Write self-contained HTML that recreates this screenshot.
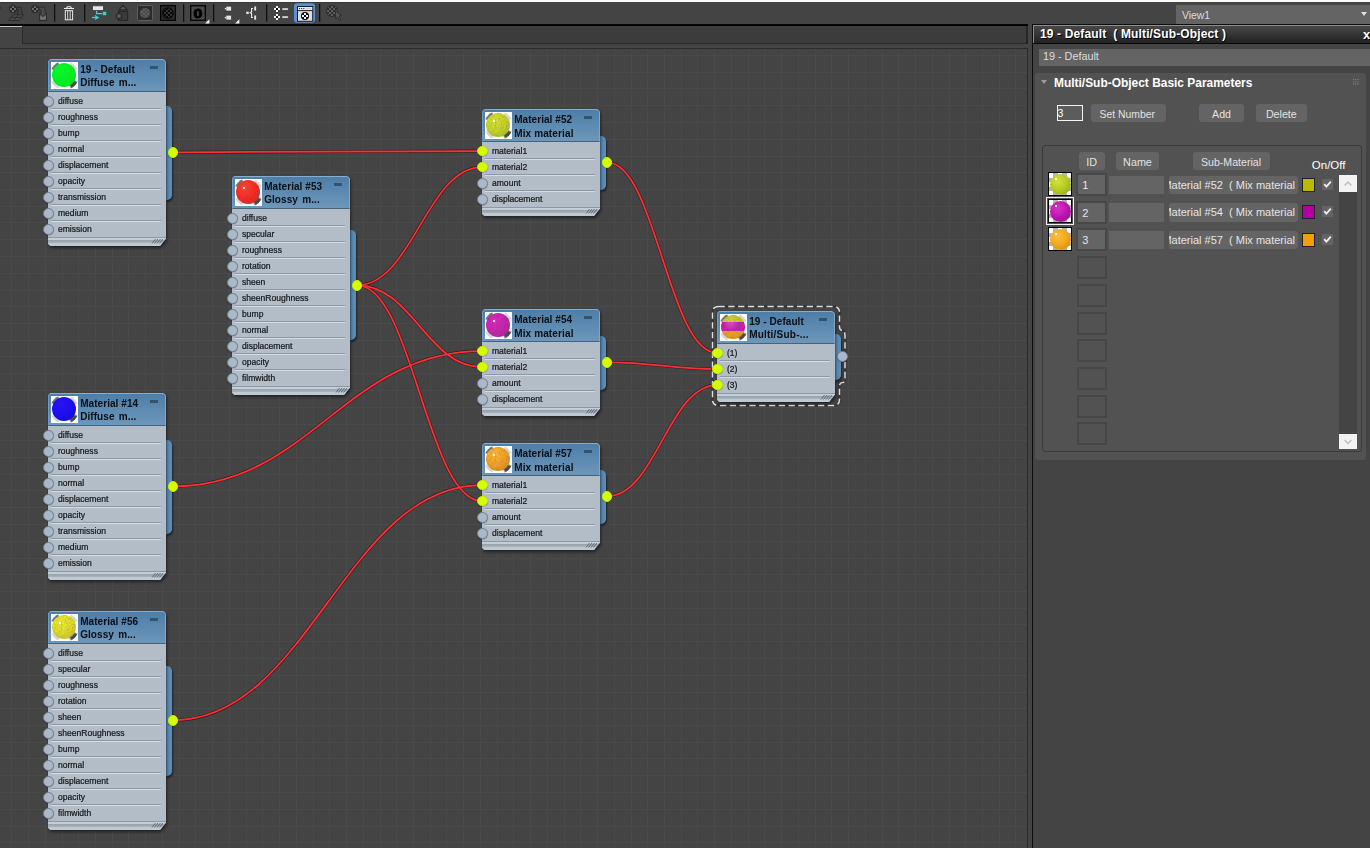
<!DOCTYPE html><html><head><meta charset="utf-8"><title>Slate Material Editor</title><style>

*{box-sizing:border-box;margin:0;padding:0}
html,body{width:1370px;height:848px;overflow:hidden;background:#444;}
body{position:relative;font-family:"Liberation Sans",sans-serif;font-size:11px;color:#e6e6e6;}
.abs{position:absolute}
#topstrip{left:0;top:0;width:1370px;height:2px;background:#fbfbfb}
#toolbar{left:0;top:2px;width:1370px;height:22px;background:#444}
#tbline{left:0;top:24px;width:1028px;height:2px;background:linear-gradient(#1a1a1a 0,#000 30%,#000 80%,#111 100%)}
#tabstrip{left:0;top:26px;width:1028px;height:19px;background:#444}
#tabsel{left:0;top:26px;width:22px;height:1px;background:#c6c6c6}
#tabbox{left:22px;top:26px;width:1006px;height:18px;background:#3c3c3c;border:1px solid #2b2b2b;border-top:0;border-right:2px solid #262626}
#canvas{left:0;top:48px;width:1028px;height:800px;background-color:#444;overflow:hidden}
#cvt{left:0;top:0;width:1028px;height:1px;background:#2b2b2b}
#cvr{left:1027px;top:0;width:1px;height:800px;background:#2b2b2b}
#grid{left:0;top:0;width:1027px;height:800px}
#viewdd{left:1176px;top:5px;width:194px;height:19px;background:#646464;color:#dcdcdc;font-size:10.4px;line-height:21px;padding-left:6px}
#viewdd i{position:absolute;left:185px;top:7px;width:0;height:0;border-left:3px solid transparent;border-right:3px solid transparent;border-top:4px solid #e0e0e0}

/* nodes */
.nw{position:absolute;width:118px;filter:drop-shadow(0 0 .7px rgba(18,26,36,.95)) drop-shadow(1px 2px 1.6px rgba(0,0,0,.5))}
.node{position:absolute;left:0;top:0;width:118px;background:#b3bdc7;clip-path:polygon(0 3px,1px 1px,3px 0,calc(100% - 4px) 0,calc(100% - 1px) 1px,100% 4px,100% calc(100% - 7.5px),calc(100% - 6px) 100%,3px 100%,1px calc(100% - 1px),0 calc(100% - 3px))}
.nh{position:absolute;left:0;top:0;width:118px;height:33px;border-radius:3px 4px 0 0;background:linear-gradient(#4e7da7 0%,#5685ae 30%,#6d97ba 100%);border-top:1px solid #86aecf;border-right:1px solid #7fa8cb;border-left:1px solid #6f9bc0;border-bottom:1px solid #46627c}
.nh .th{position:absolute;left:2px;top:2px;width:27px;height:27px;background:#fff;overflow:hidden}
.nh .t{position:absolute;left:31.2px;top:3px;width:80px;font-weight:bold;font-size:10px;line-height:13px;color:#0a0d12;white-space:nowrap;letter-spacing:.06px}
.nh .t .g{margin-left:1.5px}
.nh .t.mx{line-height:14px;top:2.5px}
.nh .t.mx span{letter-spacing:.13px}
.nh .mn{position:absolute;left:101px;top:5.8px;width:8px;height:2.8px;background:#33536f}
.sl{position:absolute;left:0;width:118px;height:16px}
.sl span{position:absolute;left:10px;top:0;line-height:16px;font-size:8.55px;color:#15171b;white-space:nowrap;-webkit-text-stroke:.22px #15171b}
.sl b{position:absolute;left:3px;top:15px;width:110px;height:2px;border-top:1px solid #8d98a4;border-bottom:1px solid #d3dbe3}
.so{position:absolute;width:11px;height:11px;border-radius:50%;background:#a9b8ca;border:1px solid #74818f;box-shadow:0 .5px 1px rgba(0,0,0,.3)}
.so.on{background:#d4ff00;border-color:#c4ec00;width:10.6px;height:10.6px;margin:.2px}
.ft{position:absolute;left:0;width:118px;height:9px;border-top:1px solid #8d98a4;background:linear-gradient(#c6d0da 0,#c2ccd6 22%,#98a3ae 30%,#a9b4bf 62%,#c3cdd7 70%,#bcc6d0 100%)}
.tab{position:absolute;left:118px;width:6.3px;background:#5a8cb8;border-radius:0 5px 5px 0;box-shadow:1px 2px 2px rgba(0,0,0,.5)}

/* ---------- right panel ---------- */
#pline{left:1032px;top:24px;width:1px;height:824px;background:#0c0c0c}
#ptitle{left:1033px;top:24px;width:337px;height:20px;background:linear-gradient(#4a4a4a 0,#3c3c3c 35%,#222 100%);border-top:1px solid #0e0e0e;border-bottom:1px solid #0a0a0a;box-shadow:inset 1px 1px 0 #8e8e8e}
#ptitle span{position:absolute;left:7px;top:2px;font-weight:bold;font-size:12px;line-height:15px;color:#fff;white-space:pre;text-shadow:1px 1px 0 #000;letter-spacing:.14px}
#ptitle b{position:absolute;left:330px;top:2px;font-size:13px;line-height:15px;color:#fff;text-shadow:1px 1px 0 #000}
#pname{left:1039px;top:49px;width:331px;height:17px;background:#646464;color:#dedede;font-size:10.8px;line-height:15px;padding-left:4px}
#roll{left:1035px;top:73px;width:331px;height:387px;background:#525252;border-radius:3px}
#roll .tri{position:absolute;left:6px;top:7px;width:0;height:0;border-left:3px solid transparent;border-right:3px solid transparent;border-top:4.5px solid #9c9c9c}
#roll .rt{position:absolute;left:19px;top:2px;font-weight:bold;font-size:11.95px;line-height:16px;color:#fff;white-space:nowrap}
#roll .grip{position:absolute;left:318px;top:6px}
.btn{position:absolute;background:#646464;border-radius:3px;color:#e2e2e2;text-align:center;height:18px;line-height:20px;white-space:nowrap;overflow:hidden}
#spin{position:absolute;left:22px;top:32px;width:26px;height:16px;border:1px solid #f4f4f4;background:#5c5c5c;color:#fff;font-size:10.5px;line-height:15px;padding-left:0;text-indent:-.4px}
#grp{position:absolute;left:7px;top:72.3px;width:320px;height:306.5px;border:1px solid #3a3a3a;border-radius:3px}
.lbl{position:absolute;color:#fff;white-space:nowrap}
.mth{position:absolute;width:24px;height:23.4px;border:1px solid #000;overflow:hidden;
 background:#fff conic-gradient(#b4b4b4 25%,#fff 0 50%,#b4b4b4 0 75%,#fff 0) 0 0/9px 9px}
.mth.sel{outline:1px solid #f2f2f2;outline-offset:1px}
.mth i{position:absolute;left:.6px;top:.8px;width:21px;height:20.6px;border-radius:50%}
.mth u{position:absolute;left:6px;top:5px;width:1.6px;height:1.6px;background:#fff;border-radius:50%}
.idf{position:absolute;left:33.3px;width:30.5px;height:23.3px;border:2.5px solid #484848;background:#646464;color:#e6e6e6;font-size:11px;line-height:20.5px;padding-left:4px}
.idf.e{background:transparent;border-width:2px;border-color:#474747}
.nmf{position:absolute;left:73.5px;width:55.5px;height:18.5px;background:#646464}
.smb{width:129.4px;height:18.5px;font-size:11px;color:#e4e4e4}
.smb span{position:absolute;left:calc(50% - 1.4px);top:0;transform:translateX(-50%);white-space:pre;line-height:19.5px}
.sw{position:absolute;left:267px;width:13px;height:14px;border:1px solid #232323}
.cb{position:absolute;left:287.4px;width:11px;height:10.6px;background:#646464}
#sbt{position:absolute;left:304px;top:102px;width:18px;height:274px;background:#444}
.sbb{position:absolute;left:304px;width:18px;background:#f2f2f2}

</style></head><body>
<svg width="0" height="0" style="position:absolute"><defs><filter id="nz" x="0" y="0" width="100%" height="100%"><feTurbulence type="fractalNoise" baseFrequency="0.55" numOctaves="2" seed="7" result="n"/><feColorMatrix in="n" type="matrix" values="0 0 0 0 0.35  0 0 0 0 0.08  0 0 0 0 0.12  0.8 0.8 0 0 -0.66" result="m"/><feComposite in="m" in2="SourceGraphic" operator="in" result="c"/><feMerge><feMergeNode in="SourceGraphic"/><feMergeNode in="c"/></feMerge></filter></defs></svg>
<div id="topstrip" class="abs"></div>
<div id="toolbar" class="abs">
<svg class="abs" style="left:0;top:0" width="400" height="22" viewBox="0 2 400 22">
<defs><pattern id="ck2" x="0" y="0" width="4" height="4" patternUnits="userSpaceOnUse"><rect x="0" y="0" width="2" height="2" fill="currentColor"/><rect x="2" y="2" width="2" height="2" fill="currentColor"/></pattern><pattern id="ckA" width="4" height="4" patternUnits="userSpaceOnUse" x="1" y="1"><rect width="2" height="2" fill="#484848"/><rect x="2" y="2" width="2" height="2" fill="#484848"/></pattern><pattern id="ckB" width="4" height="4" patternUnits="userSpaceOnUse" x="0" y="0"><rect width="2" height="2" fill="#343434"/><rect x="2" y="2" width="2" height="2" fill="#343434"/></pattern><pattern id="ckC" width="4" height="4" patternUnits="userSpaceOnUse" x="1" y="0"><rect width="2" height="2" fill="#5e5e5e"/><rect x="2" y="2" width="2" height="2" fill="#5e5e5e"/></pattern><clipPath id="cpA"><circle cx="145" cy="13" r="5"/></clipPath><clipPath id="cpB"><circle cx="168" cy="13" r="4.6"/></clipPath><clipPath id="cpC"><circle cx="332" cy="11" r="5.3"/></clipPath></defs>
<rect x="0" y="2" width="400" height="1" fill="#383838"/>
<rect x="0" y="6.5" width=".8" height="2.8" fill="#323232"/>
<circle cx="13" cy="9" r="4.2" fill="#2d2d2d"/><rect x="12" y="6" width="2" height="2" fill="#6c6c6c"/><rect x="12" y="10" width="2" height="2" fill="#6c6c6c"/><rect x="10" y="8" width="2" height="2" fill="#6c6c6c"/><rect x="14" y="8" width="2" height="2" fill="#6c6c6c"/><rect x="12" y="8" width="2" height="2" fill="#1c1c1c"/>
<path d="M17 7.3H21.3V12.2H22.8L19.8 15.6 16.8 12.2H18.7V9.8H17Z" fill="#464646" stroke="#2d2d2d" stroke-width="1" stroke-linejoin="round"/>
<path d="M13.5 14.6H23.3L19.6 20.5H8.6Z" fill="#494949" stroke="#2d2d2d" stroke-width="1"/>
<path d="M11.3 17.5H21.5M18.3 14.5L14 20.5" stroke="#2d2d2d" stroke-width="1" fill="none"/>
<circle cx="35" cy="9" r="4.2" fill="#2d2d2d"/><rect x="34" y="6" width="2" height="2" fill="#6c6c6c"/><rect x="34" y="10" width="2" height="2" fill="#6c6c6c"/><rect x="32" y="8" width="2" height="2" fill="#6c6c6c"/><rect x="36" y="8" width="2" height="2" fill="#6c6c6c"/><rect x="34" y="8" width="2" height="2" fill="#1c1c1c"/>
<path d="M39 7.2H45V12.8H46.6L43 16.6 39.4 12.8H41.2V10H39Z" fill="#4c4c4c" stroke="#2d2d2d" stroke-width="1" stroke-linejoin="round"/>
<path d="M39.6 13.2V20.4H46.4V13.2" fill="none" stroke="#2d2d2d" stroke-width="1.2"/>
<path d="M40.2 15L43 17.6 45.8 15V19.8H40.2Z" fill="#767676"/>
<rect x="54.1" y="4" width="1.15" height="17.8" fill="#0c0c0c"/>
<rect x="84.1" y="4" width="1.15" height="17.8" fill="#0c0c0c"/>
<rect x="183.1" y="4" width="1.15" height="17.8" fill="#0c0c0c"/>
<rect x="213.1" y="4" width="1.15" height="17.8" fill="#0c0c0c"/>
<rect x="266.1" y="4" width="1.15" height="17.8" fill="#0c0c0c"/>
<rect x="319.1" y="4" width="1.15" height="17.8" fill="#0c0c0c"/>
<path d="M64 8.5H74" stroke="#e9e9e9" stroke-width="1.1"/>
<path d="M66.8 8.2C66.8 6 71.2 6 71.2 8.2" fill="none" stroke="#e9e9e9" stroke-width="1.1"/>
<rect x="65.3" y="10.7" width="7.3" height="9.1" fill="#3a3a3a" stroke="#e9e9e9" stroke-width="1"/>
<path d="M67.7 10.6V19.8M70.2 10.6V19.8" stroke="#e9e9e9" stroke-width=".9"/>
<rect x="92.6" y="5.8" width="10.8" height="4.6" fill="#e6e6e6" stroke="#3a3a3a" stroke-width=".8"/>
<path d="M96.6 10.8V13.6H102.2" fill="none" stroke="#3fd2d2" stroke-width="1.3"/>
<rect x="102.8" y="11.8" width="3.4" height="3.4" fill="#3fd2d2"/>
<path d="M92 17.5H96" stroke="#3fd2d2" stroke-width="1.3"/><path d="M94.6 14.8L99.4 17.5 94.6 20.2 95.8 17.5Z" fill="#3fd2d2"/>
<path d="M123 5.4L127.2 9.9H118.8Z" fill="#5c5c5c" stroke="#2a2a2a" stroke-width="1.1" stroke-linejoin="round"/>
<rect x="118.6" y="11.4" width="9" height="9" fill="#3b3b3b" stroke="#292929" stroke-width="1.3"/>
<circle cx="119" cy="16" r="2.6" fill="#5a5a5a" stroke="#292929" stroke-width="1.2"/>
<rect x="137.5" y="5.5" width="15" height="15" rx=".8" fill="#2b2b2b" stroke="#5e5e5e" stroke-width="1"/>
<circle cx="145" cy="13" r="5" fill="#5e5e5e"/>
<rect x="139" y="7" width="12" height="12" fill="url(#ckA)" clip-path="url(#cpA)"/>
<rect x="160.6" y="5.6" width="14.8" height="14.8" fill="#2a2a2a" stroke="#050505" stroke-width="1.2"/>
<circle cx="168" cy="13" r="5.8" fill="#060606"/>
<rect x="162" y="7" width="12" height="12" fill="url(#ckB)" clip-path="url(#cpB)"/>
<rect x="190.7" y="5.7" width="14.6" height="14.6" fill="#4b4b4b" stroke="#060606" stroke-width="1.4"/>
<text x="198" y="17.8" transform="translate(198 0) scale(1.2 1) translate(-198 0)" text-anchor="middle" font-family="Liberation Sans,sans-serif" font-weight="bold" font-size="13.2" fill="#000" stroke="#000" stroke-width=".9" stroke-linejoin="round">0</text>
<path d="M205 23.6H209.4V19.2Z" fill="#f2f2f2"/>
<rect x="226" y="6.2" width="5.4" height="4.8" fill="#e4e4e4" stroke="#353535" stroke-width=".6"/>
<rect x="224.8" y="7.9" width="1.4" height="1.4" fill="#e4e4e4"/>
<rect x="226" y="15.2" width="5.4" height="4.8" fill="#e4e4e4" stroke="#353535" stroke-width=".6"/>
<rect x="224.8" y="16.9" width="1.4" height="1.4" fill="#e4e4e4"/>
<path d="M235 23.6H239.4V19.2Z" fill="#f2f2f2"/>
<rect x="246" y="11.2" width="3" height="3" fill="#e8e8e8" stroke="#353535" stroke-width=".5"/>
<path d="M253.2 8.5H251.6V12L250.2 12.8 251.6 13.6V17.5H253.2" fill="none" stroke="#ececec" stroke-width="1.1"/>
<rect x="254" y="6.1" width="2.3" height="4.8" fill="#e8e8e8" stroke="#353535" stroke-width=".5"/>
<rect x="254" y="15.1" width="2.3" height="4.9" fill="#e8e8e8" stroke="#353535" stroke-width=".5"/>
<circle cx="277" cy="9" r="0.1" fill="#444"/><rect x="276" y="6" width="2" height="2" fill="#f2f2f2"/><rect x="276" y="10" width="2" height="2" fill="#f2f2f2"/><rect x="274" y="8" width="2" height="2" fill="#f2f2f2"/><rect x="278" y="8" width="2" height="2" fill="#f2f2f2"/><rect x="276" y="8" width="2" height="2" fill="#0a0a0a"/>
<rect x="282" y="8" width="6.2" height="2.1" fill="#ececec" stroke="#353535" stroke-width=".5"/>
<circle cx="277" cy="17" r="0.1" fill="#444"/><rect x="276" y="14" width="2" height="2" fill="#f2f2f2"/><rect x="276" y="18" width="2" height="2" fill="#f2f2f2"/><rect x="274" y="16" width="2" height="2" fill="#f2f2f2"/><rect x="278" y="16" width="2" height="2" fill="#f2f2f2"/><rect x="276" y="16" width="2" height="2" fill="#0a0a0a"/>
<rect x="282" y="16" width="6.2" height="2.1" fill="#ececec" stroke="#353535" stroke-width=".5"/>
<rect x="294" y="3.2" width="21" height="19.6" rx="3.2" fill="#5b8fd2"/>
<rect x="297.5" y="6.5" width="15.2" height="14.8" fill="#dedede" stroke="#1c1c1c" stroke-width="1"/>
<rect x="298" y="7" width="14.2" height="3" fill="#ececec"/>
<path d="M297.5 10.6H312.7" stroke="#1c1c1c" stroke-width="1"/>
<rect x="299.1" y="8" width="1" height="1.1" fill="#222"/>
<rect x="301.2" y="8" width="1" height="1.1" fill="#222"/>
<rect x="303.3" y="8" width="1" height="1.1" fill="#222"/>
<path d="M305.5 8.5H311.5" stroke="#c4c4c4" stroke-width=".8"/>
<circle cx="305" cy="16" r="3.7" fill="#111"/>
<circle cx="305" cy="16" r="0.1" fill="#111"/><rect x="304" y="13" width="2" height="2" fill="#f4f4f4"/><rect x="304" y="17" width="2" height="2" fill="#f4f4f4"/><rect x="302" y="15" width="2" height="2" fill="#f4f4f4"/><rect x="306" y="15" width="2" height="2" fill="#f4f4f4"/><rect x="304" y="15" width="2" height="2" fill="#0a0a0a"/>
<circle cx="305" cy="16" r="3.7" fill="none" stroke="#111" stroke-width="1"/>
<circle cx="332" cy="11" r="6" fill="#2d2d2d"/>
<rect x="326" y="5" width="12" height="12" fill="url(#ckC)" clip-path="url(#cpC)"/>
<path d="M335.4 10.8L341.6 15.4 339.1 16 341 19.4 339.4 20.3 337.5 17 335.7 18.8Z" fill="#575757" stroke="#2d2d2d" stroke-width="1" stroke-linejoin="round"/>
</svg>
</div>
<div id="tbline" class="abs"></div>
<div id="tabstrip" class="abs"></div><div id="tabsel" class="abs"></div><div id="tabbox" class="abs"></div>
<div id="viewdd" class="abs">View1<i></i></div>
<div id="canvas" class="abs">
<svg id="grid" class="abs" width="1027" height="800" viewBox="0 48 1027 800" shape-rendering="crispEdges">
<path d="M11 48V848M28 48V848M45 48V848M62 48V848M78 48V848M95 48V848M112 48V848M128 48V848M145 48V848M162 48V848M179 48V848M195 48V848M212 48V848M229 48V848M246 48V848M262 48V848M279 48V848M296 48V848M313 48V848M329 48V848M346 48V848M363 48V848M380 48V848M396 48V848M413 48V848M430 48V848M446 48V848M463 48V848M480 48V848M497 48V848M513 48V848M530 48V848M547 48V848M564 48V848M580 48V848M597 48V848M614 48V848M631 48V848M647 48V848M664 48V848M681 48V848M697 48V848M714 48V848M731 48V848M748 48V848M764 48V848M781 48V848M798 48V848M815 48V848M831 48V848M848 48V848M865 48V848M882 48V848M898 48V848M915 48V848M932 48V848M949 48V848M965 48V848M982 48V848M999 48V848M1015 48V848M0 55H1027M0 72H1027M0 88H1027M0 105H1027M0 122H1027M0 139H1027M0 156H1027M0 172H1027M0 189H1027M0 206H1027M0 222H1027M0 239H1027M0 256H1027M0 273H1027M0 290H1027M0 306H1027M0 323H1027M0 340H1027M0 356H1027M0 373H1027M0 390H1027M0 407H1027M0 424H1027M0 440H1027M0 457H1027M0 474H1027M0 490H1027M0 507H1027M0 524H1027M0 541H1027M0 558H1027M0 574H1027M0 591H1027M0 608H1027M0 624H1027M0 641H1027M0 658H1027M0 675H1027M0 692H1027M0 708H1027M0 725H1027M0 742H1027M0 758H1027M0 775H1027M0 792H1027M0 809H1027M0 826H1027M0 842H1027" transform="translate(.5 .5)" stroke="#4a4a4a" stroke-width="1" fill="none"/>
</svg>
<div class="abs" style="left:0;top:-48px;width:1027px;height:848px">
<div class="abs" style="left:0;top:48px"><svg class="abs" style="left:0;top:0" width="1027" height="800" viewBox="0 48 1027 800">
<path d="M173.2 152.25 C309.072 152.25 346.128 151 482 151" fill="none" stroke="#2a1414" stroke-opacity=".8" stroke-width="3"/>
<path d="M357.2 285.25 C412.112 285.25 427.088 167 482 167" fill="none" stroke="#2a1414" stroke-opacity=".8" stroke-width="3"/>
<path d="M357.2 285.25 C412.112 285.25 427.088 367 482 367" fill="none" stroke="#2a1414" stroke-opacity=".8" stroke-width="3"/>
<path d="M357.2 285.25 C412.112 285.25 427.088 501 482 501" fill="none" stroke="#2a1414" stroke-opacity=".8" stroke-width="3"/>
<path d="M173.2 486.25 C309.072 486.25 346.128 351 482 351" fill="none" stroke="#2a1414" stroke-opacity=".8" stroke-width="3"/>
<path d="M173.2 720.25 C309.072 720.25 346.128 485 482 485" fill="none" stroke="#2a1414" stroke-opacity=".8" stroke-width="3"/>
<path d="M607.2 162.25 C655.512 162.25 668.688 353 717 353" fill="none" stroke="#2a1414" stroke-opacity=".8" stroke-width="3"/>
<path d="M607.2 362.25 C655.512 362.25 668.688 369 717 369" fill="none" stroke="#2a1414" stroke-opacity=".8" stroke-width="3"/>
<path d="M607.2 496.25 C655.512 496.25 668.688 385 717 385" fill="none" stroke="#2a1414" stroke-opacity=".8" stroke-width="3"/>
<path d="M173.2 152.25 C309.072 152.25 346.128 151 482 151" fill="none" stroke="#ff2f36" stroke-width="1.75"/>
<path d="M357.2 285.25 C412.112 285.25 427.088 167 482 167" fill="none" stroke="#ff2f36" stroke-width="1.75"/>
<path d="M357.2 285.25 C412.112 285.25 427.088 367 482 367" fill="none" stroke="#ff2f36" stroke-width="1.75"/>
<path d="M357.2 285.25 C412.112 285.25 427.088 501 482 501" fill="none" stroke="#ff2f36" stroke-width="1.75"/>
<path d="M173.2 486.25 C309.072 486.25 346.128 351 482 351" fill="none" stroke="#ff2f36" stroke-width="1.75"/>
<path d="M173.2 720.25 C309.072 720.25 346.128 485 482 485" fill="none" stroke="#ff2f36" stroke-width="1.75"/>
<path d="M607.2 162.25 C655.512 162.25 668.688 353 717 353" fill="none" stroke="#ff2f36" stroke-width="1.75"/>
<path d="M607.2 362.25 C655.512 362.25 668.688 369 717 369" fill="none" stroke="#ff2f36" stroke-width="1.75"/>
<path d="M607.2 496.25 C655.512 496.25 668.688 385 717 385" fill="none" stroke="#ff2f36" stroke-width="1.75"/>
</svg></div>
<div class="tab" style="left:166px;top:106px;height:94px"></div>
<div class="nw" style="left:48px;top:59px;height:187px"><div class="node" id="n1" style="height:187px">
<div class="nh"><div class="th"><i style="position:absolute;left:-1px;top:-.8px;width:28.6px;height:28.6px;border-radius:50%;background:conic-gradient(#fff 0 22deg,#d8d8d8 30deg 60deg,#fff 68deg 112deg,#4a4a4a 122deg 148deg,#fff 158deg 202deg,#d4d4d4 210deg 240deg,#fff 248deg 292deg,#707070 300deg 330deg,#fff 338deg)"></i><i style="position:absolute;left:1.1px;top:1px;width:24.2px;height:24.2px;border-radius:50%;background:radial-gradient(circle at 36% 30%,#08f62a 0,#04ee22 50%,#02d420 100%)"></i></div><div class="t">19 - Default<br>Diffuse <span class="g">m...</span></div><div class="mn"></div></div>
<div class="sl" style="top:34px"><span>diffuse</span><b></b></div>
<div class="sl" style="top:50px"><span>roughness</span><b></b></div>
<div class="sl" style="top:66px"><span>bump</span><b></b></div>
<div class="sl" style="top:82px"><span>normal</span><b></b></div>
<div class="sl" style="top:98px"><span>displacement</span><b></b></div>
<div class="sl" style="top:114px"><span>opacity</span><b></b></div>
<div class="sl" style="top:130px"><span>transmission</span><b></b></div>
<div class="sl" style="top:146px"><span>medium</span><b></b></div>
<div class="sl" style="top:162px"><span>emission</span></div>
<div class="ft" style="top:178px"><svg class="abs" style="right:2px;top:0" width="13" height="6"><path d="M1 5.5L4.5 1M3.5 5.5L7 1M6 5.5L9.5 1M8.5 5.5L12 1" stroke="#5a6470" stroke-width=".9" fill="none"/></svg></div>
</div></div>
<div class="so" style="left:42.8px;top:95.5px"></div>
<div class="so" style="left:42.8px;top:111.5px"></div>
<div class="so" style="left:42.8px;top:127.5px"></div>
<div class="so" style="left:42.8px;top:143.5px"></div>
<div class="so" style="left:42.8px;top:159.5px"></div>
<div class="so" style="left:42.8px;top:175.5px"></div>
<div class="so" style="left:42.8px;top:191.5px"></div>
<div class="so" style="left:42.8px;top:207.5px"></div>
<div class="so" style="left:42.8px;top:223.5px"></div>
<div class="so on" style="left:167.7px;top:146.75px"></div>
<div class="tab" style="left:350px;top:230px;height:110px"></div>
<div class="nw" style="left:232px;top:176px;height:219px"><div class="node" id="n2" style="height:219px">
<div class="nh"><div class="th"><i style="position:absolute;left:-1px;top:-.8px;width:28.6px;height:28.6px;border-radius:50%;background:conic-gradient(#fff 0 22deg,#d8d8d8 30deg 60deg,#fff 68deg 112deg,#4a4a4a 122deg 148deg,#fff 158deg 202deg,#d4d4d4 210deg 240deg,#fff 248deg 292deg,#707070 300deg 330deg,#fff 338deg)"></i><i style="filter:url(#nz);position:absolute;left:1.1px;top:1px;width:24.2px;height:24.2px;border-radius:50%;background:radial-gradient(circle at 36% 30%,#ff4230 0,#f8220e 50%,#c22c22 100%)"><u style="position:absolute;left:7px;top:6.8px;width:2.4px;height:1.8px;background:#fff;border-radius:40%;box-shadow:0 0 1px rgba(255,255,255,.7)"></u></i></div><div class="t">Material #53<br>Glossy <span class="g">m...</span></div><div class="mn"></div></div>
<div class="sl" style="top:34px"><span>diffuse</span><b></b></div>
<div class="sl" style="top:50px"><span>specular</span><b></b></div>
<div class="sl" style="top:66px"><span>roughness</span><b></b></div>
<div class="sl" style="top:82px"><span>rotation</span><b></b></div>
<div class="sl" style="top:98px"><span>sheen</span><b></b></div>
<div class="sl" style="top:114px"><span>sheenRoughness</span><b></b></div>
<div class="sl" style="top:130px"><span>bump</span><b></b></div>
<div class="sl" style="top:146px"><span>normal</span><b></b></div>
<div class="sl" style="top:162px"><span>displacement</span><b></b></div>
<div class="sl" style="top:178px"><span>opacity</span><b></b></div>
<div class="sl" style="top:194px"><span>filmwidth</span></div>
<div class="ft" style="top:210px"><svg class="abs" style="right:2px;top:0" width="13" height="6"><path d="M1 5.5L4.5 1M3.5 5.5L7 1M6 5.5L9.5 1M8.5 5.5L12 1" stroke="#5a6470" stroke-width=".9" fill="none"/></svg></div>
</div></div>
<div class="so" style="left:226.8px;top:212.5px"></div>
<div class="so" style="left:226.8px;top:228.5px"></div>
<div class="so" style="left:226.8px;top:244.5px"></div>
<div class="so" style="left:226.8px;top:260.5px"></div>
<div class="so" style="left:226.8px;top:276.5px"></div>
<div class="so" style="left:226.8px;top:292.5px"></div>
<div class="so" style="left:226.8px;top:308.5px"></div>
<div class="so" style="left:226.8px;top:324.5px"></div>
<div class="so" style="left:226.8px;top:340.5px"></div>
<div class="so" style="left:226.8px;top:356.5px"></div>
<div class="so" style="left:226.8px;top:372.5px"></div>
<div class="so on" style="left:351.7px;top:279.75px"></div>
<div class="tab" style="left:166px;top:440px;height:94px"></div>
<div class="nw" style="left:48px;top:393px;height:187px"><div class="node" id="n3" style="height:187px">
<div class="nh"><div class="th"><i style="position:absolute;left:-1px;top:-.8px;width:28.6px;height:28.6px;border-radius:50%;background:conic-gradient(#fff 0 22deg,#d8d8d8 30deg 60deg,#fff 68deg 112deg,#4a4a4a 122deg 148deg,#fff 158deg 202deg,#d4d4d4 210deg 240deg,#fff 248deg 292deg,#707070 300deg 330deg,#fff 338deg)"></i><i style="position:absolute;left:1.1px;top:1px;width:24.2px;height:24.2px;border-radius:50%;background:radial-gradient(circle at 36% 30%,#2814f4 0,#1c0eea 50%,#170cc0 100%)"></i></div><div class="t">Material #14<br>Diffuse <span class="g">m...</span></div><div class="mn"></div></div>
<div class="sl" style="top:34px"><span>diffuse</span><b></b></div>
<div class="sl" style="top:50px"><span>roughness</span><b></b></div>
<div class="sl" style="top:66px"><span>bump</span><b></b></div>
<div class="sl" style="top:82px"><span>normal</span><b></b></div>
<div class="sl" style="top:98px"><span>displacement</span><b></b></div>
<div class="sl" style="top:114px"><span>opacity</span><b></b></div>
<div class="sl" style="top:130px"><span>transmission</span><b></b></div>
<div class="sl" style="top:146px"><span>medium</span><b></b></div>
<div class="sl" style="top:162px"><span>emission</span></div>
<div class="ft" style="top:178px"><svg class="abs" style="right:2px;top:0" width="13" height="6"><path d="M1 5.5L4.5 1M3.5 5.5L7 1M6 5.5L9.5 1M8.5 5.5L12 1" stroke="#5a6470" stroke-width=".9" fill="none"/></svg></div>
</div></div>
<div class="so" style="left:42.8px;top:429.5px"></div>
<div class="so" style="left:42.8px;top:445.5px"></div>
<div class="so" style="left:42.8px;top:461.5px"></div>
<div class="so" style="left:42.8px;top:477.5px"></div>
<div class="so" style="left:42.8px;top:493.5px"></div>
<div class="so" style="left:42.8px;top:509.5px"></div>
<div class="so" style="left:42.8px;top:525.5px"></div>
<div class="so" style="left:42.8px;top:541.5px"></div>
<div class="so" style="left:42.8px;top:557.5px"></div>
<div class="so on" style="left:167.7px;top:480.75px"></div>
<div class="tab" style="left:166px;top:666px;height:110px"></div>
<div class="nw" style="left:48px;top:611px;height:219px"><div class="node" id="n4" style="height:219px">
<div class="nh"><div class="th"><i style="position:absolute;left:-1px;top:-.8px;width:28.6px;height:28.6px;border-radius:50%;background:conic-gradient(#fff 0 22deg,#d8d8d8 30deg 60deg,#fff 68deg 112deg,#4a4a4a 122deg 148deg,#fff 158deg 202deg,#d4d4d4 210deg 240deg,#fff 248deg 292deg,#707070 300deg 330deg,#fff 338deg)"></i><i style="filter:url(#nz);position:absolute;left:1.1px;top:1px;width:24.2px;height:24.2px;border-radius:50%;background:radial-gradient(circle at 36% 30%,#f0f22c 0,#dee020 50%,#bcbc26 100%)"><u style="position:absolute;left:7px;top:6.8px;width:2.4px;height:1.8px;background:#fff;border-radius:40%;box-shadow:0 0 1px rgba(255,255,255,.7)"></u></i></div><div class="t">Material #56<br>Glossy <span class="g">m...</span></div><div class="mn"></div></div>
<div class="sl" style="top:34px"><span>diffuse</span><b></b></div>
<div class="sl" style="top:50px"><span>specular</span><b></b></div>
<div class="sl" style="top:66px"><span>roughness</span><b></b></div>
<div class="sl" style="top:82px"><span>rotation</span><b></b></div>
<div class="sl" style="top:98px"><span>sheen</span><b></b></div>
<div class="sl" style="top:114px"><span>sheenRoughness</span><b></b></div>
<div class="sl" style="top:130px"><span>bump</span><b></b></div>
<div class="sl" style="top:146px"><span>normal</span><b></b></div>
<div class="sl" style="top:162px"><span>displacement</span><b></b></div>
<div class="sl" style="top:178px"><span>opacity</span><b></b></div>
<div class="sl" style="top:194px"><span>filmwidth</span></div>
<div class="ft" style="top:210px"><svg class="abs" style="right:2px;top:0" width="13" height="6"><path d="M1 5.5L4.5 1M3.5 5.5L7 1M6 5.5L9.5 1M8.5 5.5L12 1" stroke="#5a6470" stroke-width=".9" fill="none"/></svg></div>
</div></div>
<div class="so" style="left:42.8px;top:647.5px"></div>
<div class="so" style="left:42.8px;top:663.5px"></div>
<div class="so" style="left:42.8px;top:679.5px"></div>
<div class="so" style="left:42.8px;top:695.5px"></div>
<div class="so" style="left:42.8px;top:711.5px"></div>
<div class="so" style="left:42.8px;top:727.5px"></div>
<div class="so" style="left:42.8px;top:743.5px"></div>
<div class="so" style="left:42.8px;top:759.5px"></div>
<div class="so" style="left:42.8px;top:775.5px"></div>
<div class="so" style="left:42.8px;top:791.5px"></div>
<div class="so" style="left:42.8px;top:807.5px"></div>
<div class="so on" style="left:167.7px;top:714.75px"></div>
<div class="tab" style="left:600px;top:136px;height:54px"></div>
<div class="nw" style="left:482px;top:109px;height:107px"><div class="node" id="n5" style="height:107px">
<div class="nh"><div class="th"><i style="position:absolute;left:-1px;top:-.8px;width:28.6px;height:28.6px;border-radius:50%;background:conic-gradient(#fff 0 22deg,#d8d8d8 30deg 60deg,#fff 68deg 112deg,#4a4a4a 122deg 148deg,#fff 158deg 202deg,#d4d4d4 210deg 240deg,#fff 248deg 292deg,#707070 300deg 330deg,#fff 338deg)"></i><i style="filter:url(#nz);position:absolute;left:1.1px;top:1px;width:24.2px;height:24.2px;border-radius:50%;background:radial-gradient(circle at 36% 30%,#d8e828 0,#c4d81c 50%,#a0b41c 100%)"><u style="position:absolute;left:7px;top:6.8px;width:2.4px;height:1.8px;background:#fff;border-radius:40%;box-shadow:0 0 1px rgba(255,255,255,.7)"></u></i></div><div class="t mx">Material #52<br><span>Mix material</span></div><div class="mn"></div></div>
<div class="sl" style="top:34px"><span>material1</span><b></b></div>
<div class="sl" style="top:50px"><span>material2</span><b></b></div>
<div class="sl" style="top:66px"><span>amount</span><b></b></div>
<div class="sl" style="top:82px"><span>displacement</span></div>
<div class="ft" style="top:98px"><svg class="abs" style="right:2px;top:0" width="13" height="6"><path d="M1 5.5L4.5 1M3.5 5.5L7 1M6 5.5L9.5 1M8.5 5.5L12 1" stroke="#5a6470" stroke-width=".9" fill="none"/></svg></div>
</div></div>
<div class="so on" style="left:476.8px;top:145.5px"></div>
<div class="so on" style="left:476.8px;top:161.5px"></div>
<div class="so" style="left:476.8px;top:177.5px"></div>
<div class="so" style="left:476.8px;top:193.5px"></div>
<div class="so on" style="left:601.7px;top:156.75px"></div>
<div class="tab" style="left:600px;top:336px;height:54px"></div>
<div class="nw" style="left:482px;top:309px;height:107px"><div class="node" id="n6" style="height:107px">
<div class="nh"><div class="th"><i style="position:absolute;left:-1px;top:-.8px;width:28.6px;height:28.6px;border-radius:50%;background:conic-gradient(#fff 0 22deg,#d8d8d8 30deg 60deg,#fff 68deg 112deg,#4a4a4a 122deg 148deg,#fff 158deg 202deg,#d4d4d4 210deg 240deg,#fff 248deg 292deg,#707070 300deg 330deg,#fff 338deg)"></i><i style="filter:url(#nz);position:absolute;left:1.1px;top:1px;width:24.2px;height:24.2px;border-radius:50%;background:radial-gradient(circle at 36% 30%,#da22c2 0,#c41ab0 50%,#9a1c98 100%)"><u style="position:absolute;left:7px;top:6.8px;width:2.4px;height:1.8px;background:#fff;border-radius:40%;box-shadow:0 0 1px rgba(255,255,255,.7)"></u></i></div><div class="t mx">Material #54<br><span>Mix material</span></div><div class="mn"></div></div>
<div class="sl" style="top:34px"><span>material1</span><b></b></div>
<div class="sl" style="top:50px"><span>material2</span><b></b></div>
<div class="sl" style="top:66px"><span>amount</span><b></b></div>
<div class="sl" style="top:82px"><span>displacement</span></div>
<div class="ft" style="top:98px"><svg class="abs" style="right:2px;top:0" width="13" height="6"><path d="M1 5.5L4.5 1M3.5 5.5L7 1M6 5.5L9.5 1M8.5 5.5L12 1" stroke="#5a6470" stroke-width=".9" fill="none"/></svg></div>
</div></div>
<div class="so on" style="left:476.8px;top:345.5px"></div>
<div class="so on" style="left:476.8px;top:361.5px"></div>
<div class="so" style="left:476.8px;top:377.5px"></div>
<div class="so" style="left:476.8px;top:393.5px"></div>
<div class="so on" style="left:601.7px;top:356.75px"></div>
<div class="tab" style="left:600px;top:470px;height:54px"></div>
<div class="nw" style="left:482px;top:443px;height:107px"><div class="node" id="n7" style="height:107px">
<div class="nh"><div class="th"><i style="position:absolute;left:-1px;top:-.8px;width:28.6px;height:28.6px;border-radius:50%;background:conic-gradient(#fff 0 22deg,#d8d8d8 30deg 60deg,#fff 68deg 112deg,#4a4a4a 122deg 148deg,#fff 158deg 202deg,#d4d4d4 210deg 240deg,#fff 248deg 292deg,#707070 300deg 330deg,#fff 338deg)"></i><i style="filter:url(#nz);position:absolute;left:1.1px;top:1px;width:24.2px;height:24.2px;border-radius:50%;background:radial-gradient(circle at 36% 30%,#ffbe30 0,#f2a414 50%,#c8820e 100%)"><u style="position:absolute;left:7px;top:6.8px;width:2.4px;height:1.8px;background:#fff;border-radius:40%;box-shadow:0 0 1px rgba(255,255,255,.7)"></u></i></div><div class="t mx">Material #57<br><span>Mix material</span></div><div class="mn"></div></div>
<div class="sl" style="top:34px"><span>material1</span><b></b></div>
<div class="sl" style="top:50px"><span>material2</span><b></b></div>
<div class="sl" style="top:66px"><span>amount</span><b></b></div>
<div class="sl" style="top:82px"><span>displacement</span></div>
<div class="ft" style="top:98px"><svg class="abs" style="right:2px;top:0" width="13" height="6"><path d="M1 5.5L4.5 1M3.5 5.5L7 1M6 5.5L9.5 1M8.5 5.5L12 1" stroke="#5a6470" stroke-width=".9" fill="none"/></svg></div>
</div></div>
<div class="so on" style="left:476.8px;top:479.5px"></div>
<div class="so on" style="left:476.8px;top:495.5px"></div>
<div class="so" style="left:476.8px;top:511.5px"></div>
<div class="so" style="left:476.8px;top:527.5px"></div>
<div class="so on" style="left:601.7px;top:490.75px"></div>
<svg class="abs" style="left:709px;top:303px;overflow:visible" width="140" height="107">
<path d="M9.5 3.5 H124.5 Q130.5 3.5 130.5 9.5 V23.4 Q130.5 27.4 133.5 27.4 Q136 27.4 136 33.4 V73.6 Q136 79.6 133.5 79.6 Q130.5 79.6 130.5 83.6 V96.5 Q130.5 102.5 124.5 102.5 H9.5 Q3.5 102.5 3.5 96.5 V9.5 Q3.5 3.5 9.5 3.5 Z" fill="none" stroke="#363636" stroke-width="2.6" stroke-linejoin="round"/>
<path d="M9.5 3.5 H124.5 Q130.5 3.5 130.5 9.5 V23.4 Q130.5 27.4 133.5 27.4 Q136 27.4 136 33.4 V73.6 Q136 79.6 133.5 79.6 Q130.5 79.6 130.5 83.6 V96.5 Q130.5 102.5 124.5 102.5 H9.5 Q3.5 102.5 3.5 96.5 V9.5 Q3.5 3.5 9.5 3.5 Z" fill="none" stroke="#dedede" stroke-width="1.45" stroke-dasharray="6.3 3.5" stroke-linejoin="round"/>
</svg>
<div class="tab" style="left:835px;top:334px;height:46px"></div>
<div class="nw" style="left:717px;top:311px;height:91px"><div class="node" id="n8" style="height:91px">
<div class="nh"><div class="th"><i style="position:absolute;left:-1px;top:-.8px;width:28.6px;height:28.6px;border-radius:50%;background:conic-gradient(#fff 0 22deg,#d8d8d8 30deg 60deg,#fff 68deg 112deg,#4a4a4a 122deg 148deg,#fff 158deg 202deg,#d4d4d4 210deg 240deg,#fff 248deg 292deg,#707070 300deg 330deg,#fff 338deg)"></i><i style="filter:url(#nz);position:absolute;left:1.1px;top:1px;width:24.3px;height:24.3px;border-radius:50%;overflow:hidden;background:linear-gradient(#c2cc1e 0,#c2cc1e 29%,#c414b4 31%,#c414b4 65%,#eaa21a 67%,#eaa21a 100%)"><u style="position:absolute;left:0;top:0;width:25px;height:25px;border-radius:50%;background:radial-gradient(circle at 40% 32%,rgba(255,255,255,.28) 0,rgba(255,255,255,0) 35%,rgba(0,0,0,.0) 60%,rgba(0,0,0,.3) 100%)"></u></i></div><div class="t">19 - Default<br><span style="letter-spacing:.22px">Multi/Sub-...</span></div><div class="mn"></div></div>
<div class="sl" style="top:34px"><span>(1)</span><b></b></div>
<div class="sl" style="top:50px"><span>(2)</span><b></b></div>
<div class="sl" style="top:66px"><span>(3)</span></div>
<div class="ft" style="top:82px"><svg class="abs" style="right:2px;top:0" width="13" height="6"><path d="M1 5.5L4.5 1M3.5 5.5L7 1M6 5.5L9.5 1M8.5 5.5L12 1" stroke="#5a6470" stroke-width=".9" fill="none"/></svg></div>
</div></div>
<div class="so on" style="left:711.8px;top:347.5px"></div>
<div class="so on" style="left:711.8px;top:363.5px"></div>
<div class="so on" style="left:711.8px;top:379.5px"></div>
<div class="so" style="left:836.7px;top:350.75px"></div>
</div><div id="cvt" class="abs"></div><div id="cvr" class="abs"></div></div>
<div id="pline" class="abs"></div>
<div id="ptitle" class="abs"><span>19 - Default  ( Multi/Sub-Object )</span><b>x</b></div>
<div id="pname" class="abs">19 - Default</div>
<div id="roll" class="abs">
<div class="tri"></div><div class="rt">Multi/Sub-Object Basic Parameters</div><svg class="grip" width="6" height="6" viewBox="0 0 6 6"><path d="M0 .5H1.1M2.2 .5H3.3M4.4 .5H5.5M0 2.7H1.1M2.2 2.7H3.3M4.4 2.7H5.5M0 4.9H1.1M2.2 4.9H3.3M4.4 4.9H5.5" stroke="#848484" stroke-width="1.1"/></svg>
<div id="spin">3</div>
<div class="btn" style="left:55.8px;top:31px;width:75.4px;font-size:10.4px;line-height:21.4px;padding-right:2.4px">Set Number</div>
<div class="btn" style="left:164px;top:31px;width:45px;font-size:10.6px">Add</div>
<div class="btn" style="left:220.7px;top:31px;width:51.3px;font-size:10.7px">Delete</div>
<div id="grp">
<div class="btn" style="left:36px;top:5.7px;width:25.5px;font-size:10.8px">ID</div>
<div class="btn" style="left:72.7px;top:5.7px;width:43.6px;font-size:10.8px">Name</div>
<div class="btn" style="left:149.5px;top:5.7px;width:77px;font-size:10.6px">Sub-Material</div>
<div class="lbl" style="left:268.8px;top:12.2px;font-size:11.5px;line-height:14px">On/Off</div>
<div class="mth" style="left:5.2px;top:26px"><i style="background:radial-gradient(circle at 38% 34%,#d4e23c 0,#b4c820 50%,#8ca21a 100%)"></i><u></u></div>
<div class="idf" style="top:26.9px">1</div>
<div class="nmf" style="left:65.6px;top:29.4px"></div>
<div class="btn smb" style="left:125.8px;top:29.4px"><span>Material #52  ( Mix material )</span></div>
<div class="sw" style="left:259.2px;top:31.6px;background:#baba00"></div>
<div class="cb" style="left:279.4px;top:32.7px"><svg width="11" height="11" viewBox="0 0 11 11" style="position:absolute;left:0;top:0"><path d="M2.2 5.2L4.4 7.6 8.8 2.6" fill="none" stroke="#f0f0f0" stroke-width="1.8"/></svg></div>
<div class="mth sel" style="left:5.2px;top:53px"><i style="background:radial-gradient(circle at 38% 34%,#d636c8 0,#bc12ae 50%,#8e0e88 100%)"></i><u></u></div>
<div class="idf" style="top:54.4px">2</div>
<div class="nmf" style="left:65.6px;top:56.9px"></div>
<div class="btn smb" style="left:125.8px;top:56.9px"><span>Material #54  ( Mix material )</span></div>
<div class="sw" style="left:259.2px;top:59.1px;background:#b400a2"></div>
<div class="cb" style="left:279.4px;top:60.2px"><svg width="11" height="11" viewBox="0 0 11 11" style="position:absolute;left:0;top:0"><path d="M2.2 5.2L4.4 7.6 8.8 2.6" fill="none" stroke="#f0f0f0" stroke-width="1.8"/></svg></div>
<div class="mth" style="left:5.2px;top:81.1px"><i style="background:radial-gradient(circle at 38% 34%,#fcc040 0,#f0a61a 50%,#c68410 100%)"></i><u></u></div>
<div class="idf" style="top:81.9px">3</div>
<div class="nmf" style="left:65.6px;top:84.4px"></div>
<div class="btn smb" style="left:125.8px;top:84.4px"><span>Material #57  ( Mix material )</span></div>
<div class="sw" style="left:259.2px;top:86.6px;background:#f0a000"></div>
<div class="cb" style="left:279.4px;top:87.7px"><svg width="11" height="11" viewBox="0 0 11 11" style="position:absolute;left:0;top:0"><path d="M2.2 5.2L4.4 7.6 8.8 2.6" fill="none" stroke="#f0f0f0" stroke-width="1.8"/></svg></div>
<div class="idf e" style="left:33.5px;top:110px;width:30.4px;height:23px"></div>
<div class="idf e" style="left:33.5px;top:137.68px;width:30.4px;height:23px"></div>
<div class="idf e" style="left:33.5px;top:165.36px;width:30.4px;height:23px"></div>
<div class="idf e" style="left:33.5px;top:193.04px;width:30.4px;height:23px"></div>
<div class="idf e" style="left:33.5px;top:220.72px;width:30.4px;height:23px"></div>
<div class="idf e" style="left:33.5px;top:248.4px;width:30.4px;height:23px"></div>
<div class="idf e" style="left:33.5px;top:276.08px;width:30.4px;height:23px"></div>
<div id="sbt" style="left:296px;top:45.7px;width:18px;height:242px"></div>
<div class="sbb" style="left:296px;top:28.7px;height:17px"><svg width="18" height="17" style="position:absolute;left:0;top:0"><path d="M5.6 10.4L9 7 12.4 10.4" fill="none" stroke="#bdbdbd" stroke-width="1.4"/></svg></div>
<div class="sbb" style="left:296px;top:287.7px;height:15px"><svg width="18" height="15" style="position:absolute;left:0;top:0"><path d="M5.6 6L9 9.4 12.4 6" fill="none" stroke="#bdbdbd" stroke-width="1.4"/></svg></div>
</div>
</div>
</body></html>
